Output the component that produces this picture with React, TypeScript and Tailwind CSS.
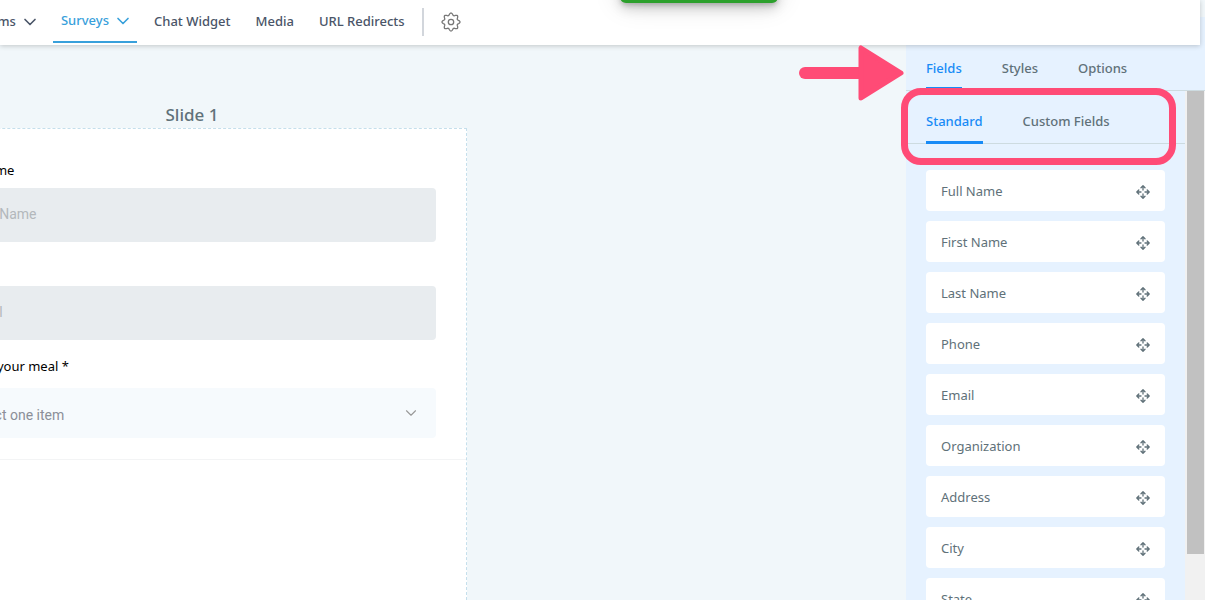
import { ChevronDown } from 'lucide-react';

const navLinks = [
  { label: 'Chat Widget' },
  { label: 'Media' },
  { label: 'URL Redirects' },
];

const panelTabs = ['Fields', 'Styles', 'Options'];
const fieldTabs = ['Standard', 'Custom Fields'];

const fields = [
  'Full Name',
  'First Name',
  'Last Name',
  'Phone',
  'Email',
  'Organization',
  'Address',
  'City',
  'State',
];

// Eight rounded teeth around the centre
const gearPoints = Array.from({ length: 96 }, (_, i) => {
  const angle = (i / 96) * Math.PI * 2;
  const radius = 7.9 + 1.1 * Math.cos(angle * 8);
  return `${(10 + radius * Math.sin(angle)).toFixed(2)},${(10 - radius * Math.cos(angle)).toFixed(2)}`;
}).join(' ');

function GearIcon() {
  return (
    <svg width="20" height="20" viewBox="0 0 20 20" fill="none" stroke="currentColor" strokeWidth="1.3" strokeLinejoin="round">
      <circle cx="10" cy="10" r="2.7" />
      <polygon points={gearPoints} />
    </svg>
  );
}

function MoveIcon() {
  return (
    <svg width="14" height="14" viewBox="0 0 14 14" fill="none" stroke="currentColor" strokeWidth="1.3" strokeLinecap="round" strokeLinejoin="round">
      <path d="M7 5V1M5 2.800 7 .8l2 2" />
      <path d="M7 9v4M5 11.200l2 2 2-2" />
      <path d="M5 7H1M2.800 5 .8 7l2 2" />
      <path d="M9 7h4M11.200 5l2 2-2 2" />
    </svg>
  );
}

function Header() {
  return (
    <header className="relative z-10 mr-[5px] h-[45px] shrink-0 bg-white shadow-[0_1px_5px_rgba(0,0,0,0.2)]">
      <nav className="-ml-[31px] flex h-[43px] items-center gap-[9px] text-[13px] font-medium text-[#4a5568]">
        <button className="flex h-full items-center gap-1 pr-1 pl-2">
          Forms
          <ChevronDown size={20} />
        </button>
        <button className="flex h-full items-center gap-1 border-b-2 border-[#38a0db] pr-1 pl-2 text-[#38a0db]">
          Surveys
          <ChevronDown size={20} />
        </button>
        {navLinks.map((link) => (
          <a key={link.label} href="#" className="px-2">
            {link.label}
          </a>
        ))}
        <span className="h-7 w-0.5 bg-[#d2d6dc]" />
        <button aria-label="Settings" className="px-2 text-[#777]">
          <GearIcon />
        </button>
      </nav>
    </header>
  );
}

function SlideForm() {
  return (
    <section className="-ml-[83px] flex w-[550px] shrink-0 flex-col pt-14">
      <h2 className="text-center text-[17px] leading-[27px] font-medium text-[#607179]">Slide 1</h2>
      <form className="flex-1 border border-b-0 border-dashed border-[#c5dfec] bg-white font-['Noto_Sans',sans-serif]">
        <div className="border-b border-[#f3f4f5] px-[30px] pt-[31px] pb-[21px]">
          <label htmlFor="first-name" className="block text-[13px] leading-5 text-black">
            First Name
          </label>
          <input
            id="first-name"
            placeholder="First Name"
            className="mt-2 block h-[54px] w-full rounded bg-[#e8ecef] px-5 pb-0.5 font-['Roboto',sans-serif] text-sm placeholder:text-[#b3b8bc]"
          />
          <label htmlFor="email" className="mt-4 block text-[13px] leading-5 text-black">
            Email
          </label>
          <input
            id="email"
            placeholder="Email"
            className="mt-2 block h-[54px] w-full rounded bg-[#e8ecef] px-5 pb-0.5 font-['Roboto',sans-serif] text-sm placeholder:text-[#b3b8bc]"
          />
          <label htmlFor="meal" className="mt-4 block text-[13px] leading-5 text-black">
            Choose your meal *
          </label>
          <div className="relative mt-3">
            <select
              id="meal"
              className="block h-[50px] w-full appearance-none rounded bg-[#f6fafd] px-5 pt-1 font-['Roboto',sans-serif] text-sm text-[#8b8f98]"
            >
              <option>Select one item</option>
            </select>
            <ChevronDown size={18} strokeWidth={1.5} className="pointer-events-none absolute top-4 right-4 text-[#999]" />
          </div>
        </div>
      </form>
    </section>
  );
}

function FieldsPanel() {
  return (
    <aside className="-mt-7 flex w-[299px] shrink-0 flex-col bg-[#e6f2ff] pt-7 text-[13px] text-[#607179]">
      <div className="flex h-[46px] shrink-0 gap-10 border-b border-[#cddbe0] px-5 font-medium">
        {panelTabs.map((tab) => (
          <button
            key={tab}
            className={
              tab === 'Fields'
                ? 'border-b-3 border-[#188bf6] pt-1.5 text-[#188bf6]'
                : 'border-b-3 border-transparent pt-1.5'
            }
          >
            {tab}
          </button>
        ))}
      </div>
      <div className="flex min-h-0 flex-1">
        <div className="min-w-0 flex-1 overflow-hidden">
          <div className="flex h-[53px] gap-10 border-b border-[#cddbe0] px-5 font-medium">
            {fieldTabs.map((tab) => (
              <button
                key={tab}
                className={
                  tab === 'Standard'
                    ? '-mb-px border-b-3 border-[#188bf6] pt-3 text-[#188bf6]'
                    : '-mb-px border-b-3 border-transparent pt-3'
                }
              >
                {tab}
              </button>
            ))}
          </div>
          <ul className="flex flex-col gap-2.5 px-5 pt-[26px]">
            {fields.map((field) => (
              <li key={field} className="flex h-[41px] items-center justify-between rounded bg-white px-[15px] pt-0.5">
                {field}
                <MoveIcon />
              </li>
            ))}
          </ul>
        </div>
        {/* Scrollbar */}
        <div className="w-5 bg-[#f1f1f1] pr-px pl-0.5">
          <div className="h-[91%] bg-[#c1c1c1]" />
        </div>
      </div>
    </aside>
  );
}

export default function App() {
  return (
    <div className="relative flex h-screen flex-col overflow-hidden bg-[#f1f7fa] font-['Noto_Sans',sans-serif]">
      <Header />
      <main className="flex min-h-0 flex-1 justify-between">
        <SlideForm />
        <FieldsPanel />
      </main>

      {/* Toast */}
      <div className="absolute -top-10 left-[620px] z-20 h-[43px] w-[158px] rounded-md bg-[#2ca02c] shadow-[0_3px_5px_-1px_rgba(0,0,0,0.2),0_6px_12px_rgba(0,0,0,0.14),0_1px_28px_rgba(0,0,0,0.14)]" />

      {/* Callouts */}
      <svg className="absolute top-[45px] right-[300px] z-20" width="106" height="56" viewBox="0 0 106 56" fill="#ff4b76">
        <path d="M6 28h60" stroke="#ff4b76" strokeWidth="12" strokeLinecap="round" />
        <path d="M62 3v50l40-25z" stroke="#ff4b76" strokeWidth="5" strokeLinejoin="round" />
      </svg>
      <div className="pointer-events-none absolute top-[88px] right-[29px] z-20 h-[77px] w-[275px] rounded-[20px] border-7 border-[#ff4b76]" />
    </div>
  );
}
